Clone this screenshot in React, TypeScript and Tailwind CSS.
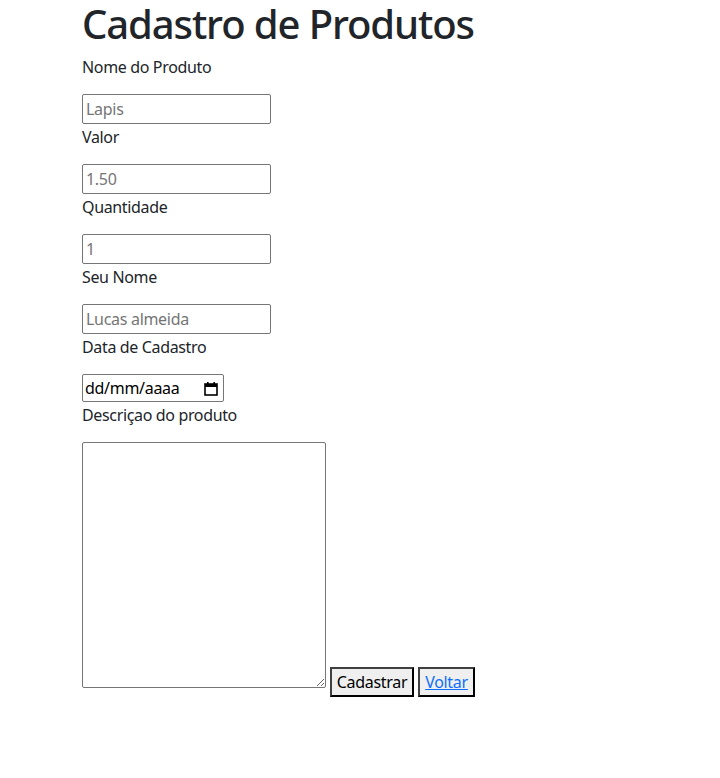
const font = { fontFamily: '"Noto Sans", "Open Sans", sans-serif' };

const labelCls = "block -mt-px pb-px text-base leading-6 tracking-[-0.35px] text-[#212529]";

function Field({ label, placeholder }: { label: string; placeholder: string }) {
    return (
        <div className="mb-[2px]">
            <label className={labelCls}>{label}</label>
            <input
                type="text"
                placeholder={placeholder}
                className="mt-[14px] block w-[189px] h-[30px] border border-[#767676] rounded-[2px] px-[3px] text-base leading-6 tracking-[-0.3px] text-[#212529] placeholder:text-[#757575] outline-none"
            />
        </div>
    );
}

export default function App() {
    return (
        <div className="min-h-[778px] bg-white pl-[82px]" style={font}>
            <h1 className="text-[40px] leading-[48px] font-medium text-[#212529] mb-2 tracking-[-1.1px]">
                Cadastro de Produtos
            </h1>

            <Field label="Nome do Produto" placeholder="Lapis" />
            <Field label="Valor" placeholder="1.50" />
            <Field label="Quantidade" placeholder="1" />
            <Field label="Seu Nome" placeholder="Lucas almeida" />

            {/* Data */}
            <div className="mb-[2px]">
                <label className={labelCls}>Data de Cadastro</label>
                <div className="mt-[14px] flex items-center justify-between w-[142px] h-[28px] border border-[#767676] rounded-[2px] pl-[2px] pr-[5px] text-base tracking-[-0.3px] text-black">
                    <span>dd/mm/aaaa</span>
                    <svg width="14" height="15" viewBox="0 0 14 15" className="shrink-0">
                        <rect x="1" y="3" width="12" height="11" fill="none" stroke="#000" strokeWidth="1.6" />
                        <rect x="1" y="3" width="12" height="3" fill="#000" />
                        <rect x="3" y="1" width="1.6" height="3" fill="#000" />
                        <rect x="9.4" y="1" width="1.6" height="3" fill="#000" />
                    </svg>
                </div>
            </div>

            {/* Descricao */}
            <label className={labelCls}>Descriçao do produto</label>
            <div className="mt-[14px] flex items-end gap-[4px]">
                <textarea className="block w-[244px] h-[246px] border border-[#767676] rounded-[2px] mb-[9px] outline-none resize" />
                <button className="w-[84px] h-[30px] bg-[#efefef] border-2 border-t-[#3f3f3f] border-l-[#3f3f3f] border-b-black border-r-black text-base tracking-[-0.3px] text-black">
                    Cadastrar
                </button>
                <button className="w-[57px] h-[30px] bg-[#efefef] border-2 border-t-[#3f3f3f] border-l-[#3f3f3f] border-b-black border-r-black text-base tracking-[-0.3px]">
                    <a href="#" className="text-[#0d6efd] underline">Voltar</a>
                </button>
            </div>
        </div>
    );
}
